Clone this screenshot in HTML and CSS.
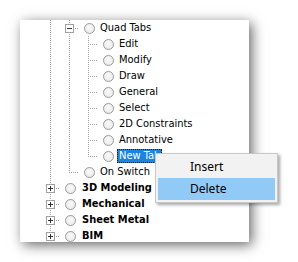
FILE: index.html
```html
<!DOCTYPE html>
<html>
<head>
<meta charset="utf-8">
<link rel="stylesheet" href="styles.css">
</head>
<body>
<div class="panel">
  <div class="tree">
    <div class="row"><span class="cell line"></span><span class="cell tee"><span class="exp minus"></span></span><span class="cell"><span class="radio"></span></span><span class="label">Quad Tabs</span></div>
    <div class="row"><span class="cell line"></span><span class="cell line"></span><span class="cell tee"></span><span class="cell"><span class="radio"></span></span><span class="label">Edit</span></div>
    <div class="row"><span class="cell line"></span><span class="cell line"></span><span class="cell tee"></span><span class="cell"><span class="radio"></span></span><span class="label">Modify</span></div>
    <div class="row"><span class="cell line"></span><span class="cell line"></span><span class="cell tee"></span><span class="cell"><span class="radio"></span></span><span class="label">Draw</span></div>
    <div class="row"><span class="cell line"></span><span class="cell line"></span><span class="cell tee"></span><span class="cell"><span class="radio"></span></span><span class="label">General</span></div>
    <div class="row"><span class="cell line"></span><span class="cell line"></span><span class="cell tee"></span><span class="cell"><span class="radio"></span></span><span class="label">Select</span></div>
    <div class="row"><span class="cell line"></span><span class="cell line"></span><span class="cell tee"></span><span class="cell"><span class="radio"></span></span><span class="label">2D Constraints</span></div>
    <div class="row"><span class="cell line"></span><span class="cell line"></span><span class="cell tee"></span><span class="cell"><span class="radio"></span></span><span class="label">Annotative</span></div>
    <div class="row"><span class="cell line"></span><span class="cell line"></span><span class="cell elbow"></span><span class="cell"><span class="radio"></span></span><span class="label selected">New Tab</span></div>
    <div class="row"><span class="cell line"></span><span class="cell elbow"></span><span class="cell"><span class="radio"></span></span><span class="label">On Switch</span></div>
    <div class="row"><span class="cell tee"><span class="exp plus"></span></span><span class="cell"><span class="radio"></span></span><span class="label bold">3D Modeling</span></div>
    <div class="row"><span class="cell tee"><span class="exp plus"></span></span><span class="cell"><span class="radio"></span></span><span class="label bold">Mechanical</span></div>
    <div class="row"><span class="cell tee"><span class="exp plus"></span></span><span class="cell"><span class="radio"></span></span><span class="label bold">Sheet Metal</span></div>
    <div class="row"><span class="cell elbow"><span class="exp plus"></span></span><span class="cell"><span class="radio"></span></span><span class="label bold">BIM</span></div>
  </div>
</div>
<div class="menu">
  <div class="item">Insert</div>
  <div class="item hover">Delete</div>
</div>
</body>
</html>
```
FILE: styles.css
```css
html, body {
  margin: 0;
  padding: 0;
  background: #ffffff;
}
body {
  width: 298px;
  height: 262px;
  overflow: hidden;
  position: relative;
  font-family: "DejaVu Sans Condensed", "DejaVu Sans", sans-serif;
  font-size: 11px;
  color: #000;
}
.panel {
  margin: 20px 0 0 20px;
  width: 229px;
  height: 222px;
  background: #fff;
  overflow: hidden;
  box-shadow: 3px 3px 12px rgba(0, 0, 0, 0.6);
}
.tree {
  padding-left: 21px;
  display: flex;
  flex-direction: column;
}
.row {
  display: flex;
  align-items: center;
  height: 16px;
  flex: none;
}
.cell {
  width: 19px;
  height: 16px;
  flex: none;
  display: flex;
  align-items: center;
  justify-content: center;
}
.line {
  background: repeating-linear-gradient(to bottom, #a0a0a0 0 1px, transparent 1px 2px) 9px 0 / 1px 16px no-repeat;
}
.tee {
  background:
    repeating-linear-gradient(to bottom, #a0a0a0 0 1px, transparent 1px 2px) 9px 0 / 1px 16px no-repeat,
    repeating-linear-gradient(to right, #a0a0a0 0 1px, transparent 1px 2px) 11px 8px / 8px 1px no-repeat;
}
.elbow {
  background:
    repeating-linear-gradient(to bottom, #a0a0a0 0 1px, transparent 1px 2px) 9px 0 / 1px 9px no-repeat,
    repeating-linear-gradient(to right, #a0a0a0 0 1px, transparent 1px 2px) 11px 8px / 8px 1px no-repeat;
}
.exp {
  box-sizing: border-box;
  width: 9px;
  height: 9px;
  border: 1px solid #a0a0a0;
  background-color: #fff;
  margin-top: 1px;
}
.minus {
  background: linear-gradient(#333, #333) center / 5px 1px no-repeat, #fff;
}
.plus {
  background:
    linear-gradient(#333, #333) center / 5px 1px no-repeat,
    linear-gradient(#333, #333) center / 1px 5px no-repeat,
    #fff;
}
.radio {
  box-sizing: border-box;
  width: 11px;
  height: 11px;
  border-radius: 50%;
  border: 1px solid #9a9a9a;
  background: radial-gradient(circle at 50% 40%, #fafafa 0, #e6e6e6 100%);
  margin-left: 1px;
}
.label {
  padding: 0 2px;
  height: 14px;
  line-height: 14px;
  white-space: nowrap;
  box-sizing: border-box;
}
.bold {
  font-weight: bold;
  padding-left: 3px;
}
.selected {
  background: #1a84e0;
  color: #fff;
  outline: 1px dotted #1b1b1b;
  outline-offset: -1px;
}
.menu {
  position: absolute;
  left: 155px;
  top: 153px;
  width: 123px;
  height: 50px;
  box-sizing: border-box;
  background: #f2f2f2;
  border: 1px solid #c8c8c8;
  box-shadow: 2px 2px 3px rgba(0, 0, 0, 0.35);
  padding: 2px 2px;
  display: flex;
  flex-direction: column;
  font-family: "Noto Sans", "DejaVu Sans", sans-serif;
  font-size: 12px;
}
.item {
  height: 22px;
  line-height: 22px;
  padding-left: 32px;
  flex: none;
}
.hover {
  background: #91c9f7;
}
```
